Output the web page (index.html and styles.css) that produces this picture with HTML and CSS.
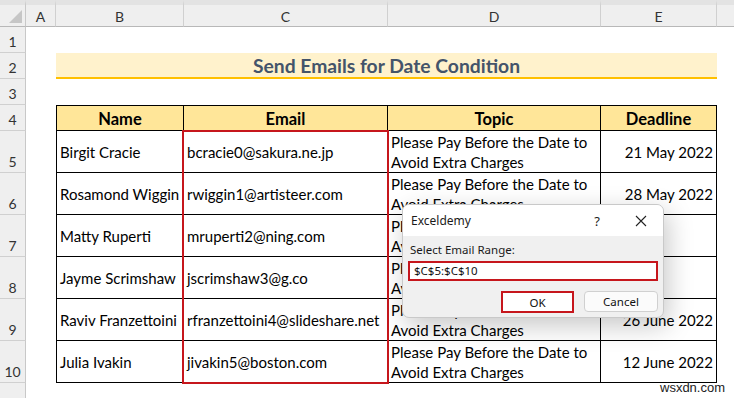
FILE: index.html
```html
<!DOCTYPE html>
<html>
<head>
<meta charset="utf-8">
<link rel="stylesheet" href="styles.css">
</head>
<body>
<div class="sheet">
  <div class="corner"><span class="tri"></span></div>
  <div class="ch">A</div>
  <div class="ch">B</div>
  <div class="ch">C</div>
  <div class="ch">D</div>
  <div class="ch">E</div>
  <div class="ch ch-last"></div>

  <div class="rh r1">1</div>
  <div class="rh r2">2</div>
  <div class="rh r3">3</div>
  <div class="rh r4">4</div>
  <div class="rh r5">5</div>
  <div class="rh r6">6</div>
  <div class="rh r7">7</div>
  <div class="rh r8">8</div>
  <div class="rh r9">9</div>
  <div class="rh r10">10</div>
  <div class="rh r11"></div>

  <div class="title">Send Emails for Date Condition</div>

  <div class="th cb r4 first">Name</div>
  <div class="th cc r4">Email</div>
  <div class="th cd r4">Topic</div>
  <div class="th ce r4">Deadline</div>

  <div class="td cb r5 first">Birgit Cracie</div>
  <div class="td cc r5">bcracie0@sakura.ne.jp</div>
  <div class="td cd r5 wrap">Please Pay Before the Date to Avoid Extra Charges</div>
  <div class="td ce r5 num">21 May 2022</div>

  <div class="td cb r6 first">Rosamond Wiggin</div>
  <div class="td cc r6">rwiggin1@artisteer.com</div>
  <div class="td cd r6 wrap">Please Pay Before the Date to Avoid Extra Charges</div>
  <div class="td ce r6 num">28 May 2022</div>

  <div class="td cb r7 first">Matty Ruperti</div>
  <div class="td cc r7">mruperti2@ning.com</div>
  <div class="td cd r7 wrap">Please Pay Before the Date to Avoid Extra Charges</div>
  <div class="td ce r7 num"></div>

  <div class="td cb r8 first">Jayme Scrimshaw</div>
  <div class="td cc r8">jscrimshaw3@g.co</div>
  <div class="td cd r8 wrap">Please Pay Before the Date to Avoid Extra Charges</div>
  <div class="td ce r8 num"></div>

  <div class="td cb r9 first">Raviv Franzettoini</div>
  <div class="td cc r9">rfranzettoini4@slideshare.net</div>
  <div class="td cd r9 wrap">Please Pay Before the Date to Avoid Extra Charges</div>
  <div class="td ce r9 num">26 June 2022</div>

  <div class="td cb r10 first">Julia Ivakin</div>
  <div class="td cc r10">jivakin5@boston.com</div>
  <div class="td cd r10 wrap">Please Pay Before the Date to Avoid Extra Charges</div>
  <div class="td ce r10 num">12 June 2022</div>

  <div class="selection"></div>

  <div class="dialog">
    <div class="dlg-head">
      <span class="dlg-title">Exceldemy</span>
      <span class="dlg-help">?</span>
      <svg class="dlg-close" width="12" height="12" viewBox="0 0 12 12"><path d="M1 1 L11 11 M11 1 L1 11" stroke="#222" stroke-width="1.1" fill="none"/></svg>
    </div>
    <div class="dlg-body">
      <div class="dlg-label">Select Email Range:</div>
      <div class="dlg-input">$C$5:$C$10</div>
      <div class="dlg-buttons">
        <div class="btn btn-ok">OK</div>
        <div class="btn btn-cancel">Cancel</div>
      </div>
    </div>
  </div>

  <div class="watermark">wsxdn.com</div>
</div>
</body>
</html>
```

FILE: styles.css
```css
* { box-sizing: border-box; }
html, body { margin: 0; padding: 0; background: #fff; }
body { width: 734px; height: 398px; overflow: hidden; font-family: "Lato", "Liberation Sans", sans-serif; }

.sheet {
  position: relative;
  display: grid;
  grid-template-columns: 26px 30px 128px 204px 213px 116px 1fr;
  grid-template-rows: 27px 26px 26px 26px 26px repeat(6, 42px) 1fr;
  width: 734px;
  height: 398px;
  background: #fff;
}

.corner {
  grid-column: 1; grid-row: 1;
  background: #efefef;
  border-right: 1px solid #c8c8c8;
  border-bottom: 1px solid #b8b8b8;
  border-top: 5px solid #e3e3e3;
  position: relative;
}
.tri {
  position: absolute; right: 3px; bottom: 3px;
  width: 0; height: 0;
  border-left: 13px solid transparent;
  border-bottom: 13px solid #c6c6c6;
}
.ch {
  grid-row: 1;
  background: #efefef;
  border-top: 5px solid #e3e3e3;
  border-bottom: 1px solid #b8b8b8;
  border-right: 1px solid #d0d0d0;
  display: flex; align-items: center; justify-content: center;
  font-size: 14px; color: #333;
  padding-top: 1px;
}
.ch-last { border-right: none; }

.rh {
  grid-column: 1;
  background: #efefef;
  border-right: 1px solid #c8c8c8;
  border-bottom: 1px solid #d0d0d0;
  display: flex; align-items: flex-end; justify-content: center;
  font-size: 14px; color: #333;
  padding-bottom: 2px;
}
.r1 { grid-row: 2; } .r2 { grid-row: 3; } .r3 { grid-row: 4; } .r4 { grid-row: 5; }
.r5 { grid-row: 6; } .r6 { grid-row: 7; } .r7 { grid-row: 8; } .r8 { grid-row: 9; }
.r9 { grid-row: 10; } .r10 { grid-row: 11; } .r11 { grid-row: 12; border-bottom: none; }

.cb { grid-column: 3; } .cc { grid-column: 4; } .cd { grid-column: 5; } .ce { grid-column: 6; }

.title {
  grid-column: 3 / 7; grid-row: 3;
  background: #fff2cc;
  border-bottom: 2px solid #ffc000;
  display: flex; align-items: center; justify-content: center;
  font-weight: 700; font-size: 19.3px; color: #44546a;
  padding-top: 1px;
}

.th, .td {
  border-right: 1px solid #000;
  border-bottom: 1px solid #000;
  color: #000;
  display: flex; align-items: center;
  font-size: 15px;
  white-space: nowrap;
}
.th {
  background: #ffe699;
  border-top: 1px solid #000;
  justify-content: center;
  font-weight: 700; font-size: 16.5px;
  padding-top: 1px;
}
.first { border-left: 1px solid #000; }
.td { padding: 0 3px; }
.wrap { white-space: normal; line-height: 20px; padding-top: 1px; }
.num { justify-content: flex-end; }

.selection {
  grid-column: 4; grid-row: 6 / 12;
  margin: -1px -1px -1px -2px;
  border: 2px solid #c6161c;
  z-index: 2;
}

.dialog {
  position: absolute; left: 402px; top: 204px;
  width: 262px; height: 114px;
  background: #f0f0f0;
  border: 1px solid #c9c9c9;
  border-radius: 7px;
  box-shadow: 4px 8px 26px rgba(0,0,0,0.22);
  z-index: 5;
  overflow: hidden;
  font-family: "Noto Sans", "Open Sans", sans-serif;
  display: flex; flex-direction: column;
}
.dlg-head {
  height: 31px; background: #fff;
  display: flex; align-items: center;
  padding: 0 16px 0 8px;
  font-size: 12px; color: #1a1a1a;
}
.dlg-title { flex: 1; }
.dlg-help { margin-right: 35px; font-size: 13px; }
.dlg-body { padding: 5px 5px 0 5px; display: flex; flex-direction: column; }
.dlg-label { font-size: 11.5px; color: #1a1a1a; padding-left: 2px; height: 17px; line-height: 17px; }
.dlg-input {
  margin-top: 3px; height: 20px;
  background: #fff;
  border: 2px solid #c6161c;
  font-size: 11.5px; line-height: 16px; padding-left: 4px; color: #111;
}
.dlg-buttons { display: flex; justify-content: flex-end; gap: 10px; margin-top: 10px; }
.btn {
  height: 22px; display: flex; align-items: center; justify-content: center;
  font-size: 11.5px; color: #111;
}
.btn-ok { width: 73px; background: #fff; border: 2px solid #c6161c; }
.btn-cancel { width: 74px; height: 21px; background: #fbfbfb; border: 1px solid #d0d0d0; border-radius: 4px; }

.watermark {
  position: absolute; left: 660px; top: 380px;
  font-family: "Liberation Sans", sans-serif; font-size: 13px; color: #222;
  text-shadow: 0 0 2px #fff;
  z-index: 6;
}
```
